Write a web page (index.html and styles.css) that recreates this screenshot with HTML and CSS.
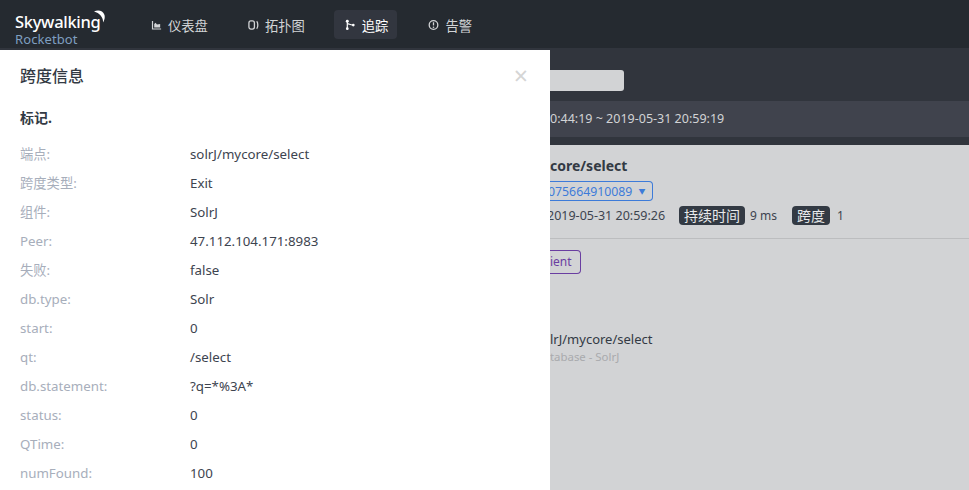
FILE: index.html
```html
<!DOCTYPE html>
<html lang="zh">
<head>
<meta charset="utf-8">
<title>Rocketbot</title>
<link rel="stylesheet" href="styles.css">
</head>
<body>
<header class="topbar">
  <div class="logo">
    <div class="logo-main"><span>Skywalking</span><svg class="logo-arc" width="12" height="14" viewBox="0 0 12 14"><path d="M0 1.500C4 -.5 9 .5 10.500 5c.6 2.500 0 5-1.500 7.500C9.500 8 6 3 0 1.500z" fill="#fff"/></svg></div>
    <div class="logo-sub">Rocketbot</div>
  </div>
  <nav class="nav">
    <a class="nav-item"><svg class="nav-icon" viewBox="0 0 12 12"><path d="M1 1.500v9.500h10V9.700H2.300V1.500z" fill="currentColor"/><path d="M3.500 8.800V5l1.500-1.500L6.500 5.500l3.500-.5v3.800z" fill="currentColor"/></svg>仪表盘</a>
    <a class="nav-item"><svg class="nav-icon" viewBox="0 0 12 12"><rect x="1" y="1.500" width="6" height="9" rx="2.200" fill="none" stroke="currentColor" stroke-width="1.400"/><path d="M9.500 2c1.600 1.500 1.600 6.500 0 8" fill="none" stroke="currentColor" stroke-width="1.400"/></svg>拓扑图</a>
    <a class="nav-item active"><svg class="nav-icon" viewBox="0 0 12 12"><path d="M2.500 2v8" stroke="currentColor" stroke-width="1.300"/><circle cx="2.500" cy="2" r="1.600" fill="currentColor"/><circle cx="2.500" cy="10" r="1.500" fill="currentColor"/><path d="M2.500 4.500c2 0 3 1.500 5.500 1.500" fill="none" stroke="currentColor" stroke-width="1.200"/><circle cx="9" cy="6" r="1.500" fill="currentColor"/></svg>追踪</a>
    <a class="nav-item"><svg class="nav-icon" viewBox="0 0 12 12"><circle cx="6" cy="6" r="4.700" fill="none" stroke="currentColor" stroke-width="1.400"/><path d="M6 3v3.500" stroke="currentColor" stroke-width="1.400"/><circle cx="6" cy="8.400" r=".9" fill="currentColor"/></svg>告警</a>
  </nav>
</header>
<div class="page">
  <aside class="drawer">
    <div class="drawer-head">
      <h2 class="drawer-title">跨度信息</h2>
      <span class="drawer-close">×</span>
    </div>
    <h3 class="section-title">标记.</h3>
    <dl class="props">
      <div class="prop"><dt>端点:</dt><dd>solrJ/mycore/select</dd></div>
      <div class="prop"><dt>跨度类型:</dt><dd>Exit</dd></div>
      <div class="prop"><dt>组件:</dt><dd>SolrJ</dd></div>
      <div class="prop"><dt>Peer:</dt><dd>47.112.104.171:8983</dd></div>
      <div class="prop"><dt>失败:</dt><dd>false</dd></div>
      <div class="prop"><dt>db.type:</dt><dd>Solr</dd></div>
      <div class="prop"><dt>start:</dt><dd>0</dd></div>
      <div class="prop"><dt>qt:</dt><dd>/select</dd></div>
      <div class="prop"><dt>db.statement:</dt><dd>?q=*%3A*</dd></div>
      <div class="prop"><dt>status:</dt><dd>0</dd></div>
      <div class="prop"><dt>QTime:</dt><dd>0</dd></div>
      <div class="prop"><dt>numFound:</dt><dd>100</dd></div>
    </dl>
  </aside>
  <main class="main">
    <div class="toolbar"><div class="search"></div></div>
    <div class="timebar">0:44:19 ~ 2019-05-31 20:59:19</div>
    <div class="strip"></div>
    <section class="content">
      <div class="detail">
        <div class="detail-title">core/select</div>
        <div class="trace-select"><span>075664910089</span><i class="caret">▼</i></div>
        <div class="meta">
          <span>2019-05-31 20:59:26</span>
          <span class="tag tag-first">持续时间</span><span class="meta-value">9 ms</span>
          <span class="tag tag-second">跨度</span><span class="meta-count">1</span>
        </div>
      </div>
      <div class="tree">
        <span class="client">ient</span>
        <div class="span-name">lrJ/mycore/select</div>
        <div class="span-sub">tabase - SolrJ</div>
      </div>
    </section>
  </main>
</div>
</body>
</html>
```
FILE: styles.css
```css
* { box-sizing: border-box; }
html, body { margin: 0; height: 100%; }
body {
  width: 969px;
  height: 490px;
  overflow: hidden;
  font-family: "Noto Sans", "Noto Sans CJK SC", sans-serif;
  font-size: 13px;
  color: #3d444f;
  background: #d2d3d5;
}
.topbar {
  height: 48px;
  background: #252a30;
  display: flex;
  align-items: center;
  color: #d2d4d6;
}
.logo { width: 140px; padding: 12px 0 0 15px; align-self: flex-start; }
.logo-main {
  display: flex;
  font-size: 16.500px;
  font-weight: 500;
  line-height: 20px;
  color: #fff;
  letter-spacing: -0.3px;
  height: 19px;
}
.logo-arc { margin: -2px 0 0 -6px; }
.logo-sub { font-size: 13px; line-height: 16px; color: #7f9fc0; letter-spacing: .1px; }
.nav { display: flex; gap: 20px; margin-top: 1px; }
.nav-item {
  display: flex;
  align-items: center;
  gap: 6px;
  height: 29px;
  padding: 1px 9px 0 11px;
  border-radius: 4px;
  font-size: 13.300px;
}
.nav-item.active { background: #32363f; color: #fff; }
.nav-icon { width: 11px; height: 12px; }
.page { position: relative; height: 442px; }
.drawer {
  position: absolute;
  left: 0;
  top: 2px;
  width: 550px;
  height: 440px;
  background: #fff;
  padding: 0 20px;
  overflow: hidden;
  z-index: 2;
}
.drawer-head { display: flex; justify-content: space-between; align-items: center; height: 50px; margin-bottom: 2px; }
.drawer-title { margin: 0; font-size: 16px; font-weight: 500; color: #333a44; }
.drawer-close { font-size: 25px; color: #d5d5d5; margin-right: 2px; }
.section-title { margin: 8px 0 11px; font-size: 14px; font-weight: 700; line-height: 20px; color: #333a44; }
.props { margin: 0; font-size: 13.300px; }
.prop { display: flex; height: 29px; align-items: center; }
.prop dt { width: 170px; color: #a7aebb; }
.prop dd { margin: 0; }
.main { height: 100%; }
.toolbar { height: 53px; background: #31353d; padding-top: 22px; }
.search { margin-left: 500px; width: 124px; height: 21px; border-radius: 3px; background: #d2d3d5; }
.timebar { height: 36px; line-height: 36px; background: #40434d; color: #d2d3d5; padding-left: 550px; font-size: 12.500px; }
.strip { height: 8px; background: #31353d; }
.content { padding-left: 550px; }
.detail { height: 94px; padding: 11px 0 0; border-bottom: 1px solid #bcbdbf; }
.detail-title { font-size: 14px; font-weight: 700; line-height: 20px; color: #333a44; }
.trace-select {
  display: inline-flex;
  align-items: center;
  gap: 6px;
  height: 20px;
  margin: 5px 0 0 -4px;
  padding: 0 7px 0 2px;
  border: 1px solid #3d7bd9;
  border-left: 0;
  border-radius: 0 4px 4px 0;
  color: #3d7bd9;
  font-size: 12.300px;
}
.caret { font-style: normal; font-size: 7px; }
.meta { display: flex; align-items: center; gap: 6px; margin: 5px 0 0 -3px; font-size: 12.500px; }
.meta-value { font-size: 12px; margin-left: -1px; }
.meta-count { font-size: 12px; margin-left: 1px; }
.tag { background: #333a44; color: #e9eaeb; border-radius: 4px; padding: 0 5px; line-height: 19px; font-size: 14px; }
.tag-first { margin-left: 8px; }
.tag-second { margin-left: 9px; }
.tree { padding-top: 11px; }
.client {
  display: block;
  width: 31px;
  height: 24px;
  line-height: 22px;
  border: 1px solid #6a3ea1;
  border-left: 0;
  border-radius: 0 4px 4px 0;
  color: #6a3ea1;
  font-size: 12px;
}
.span-name { margin-top: 55px; line-height: 20px; font-size: 13px; color: #333a44; }
.span-sub { font-size: 11.400px; line-height: 16px; color: #a9aaad; }
```
